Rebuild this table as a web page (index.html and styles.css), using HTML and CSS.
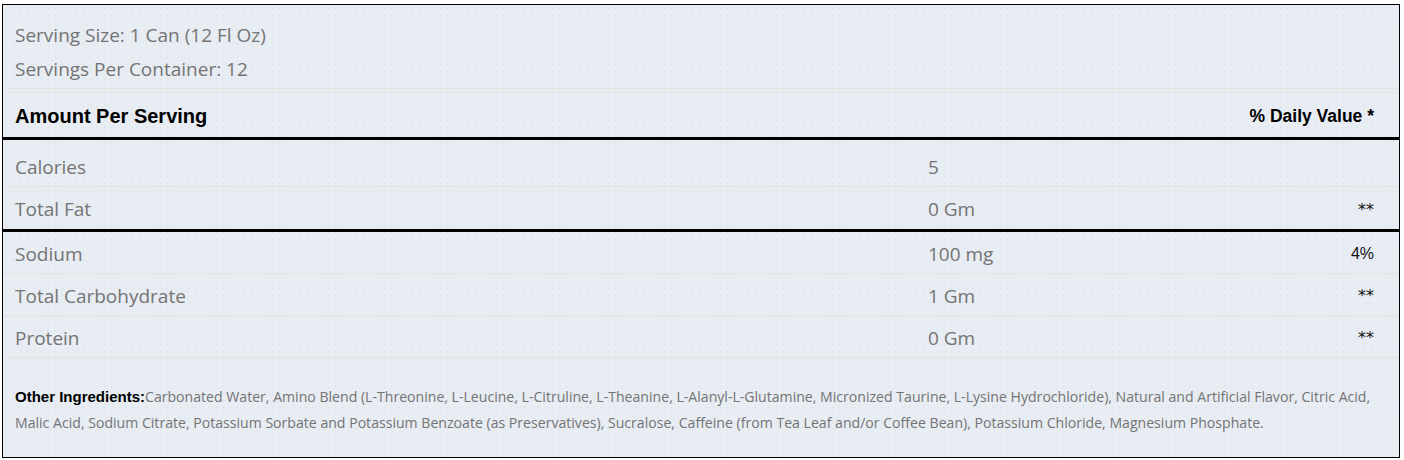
FILE: index.html
```html
<!DOCTYPE html>
<html>
<head>
<meta charset="utf-8">
<link rel="stylesheet" href="styles.css">
</head>
<body>
<div class="panel">
  <div class="serving">
    <div>Serving Size: 1 Can (12 Fl Oz)</div>
    <div>Servings Per Container: 12</div>
  </div>
  <div class="head">
    <span>Amount Per Serving</span>
    <span class="head-dv">% Daily Value *</span>
  </div>
  <div class="group group-thick">
    <div class="row first"><span class="name">Calories</span><span class="amt">5</span><span class="dv"></span></div>
    <div class="row last"><span class="name">Total Fat</span><span class="amt">0 Gm</span><span class="dv stars">**</span></div>
  </div>
  <div class="group">
    <div class="row"><span class="name">Sodium</span><span class="amt">100 mg</span><span class="dv">4%</span></div>
    <div class="row"><span class="name">Total Carbohydrate</span><span class="amt">1 Gm</span><span class="dv stars">**</span></div>
    <div class="row"><span class="name">Protein</span><span class="amt">0 Gm</span><span class="dv stars">**</span></div>
  </div>
  <div class="ingredients">
    <p><b>Other Ingredients:</b>Carbonated Water, Amino Blend (L-Threonine, L-Leucine, L-Citruline, L-Theanine, L-Alanyl-L-Glutamine, Micronized Taurine, L-Lysine Hydrochloride), Natural and Artificial Flavor, Citric Acid,<br>Malic Acid, Sodium Citrate, Potassium Sorbate and Potassium Benzoate (as Preservatives), Sucralose, Caffeine (from Tea Leaf and/or Coffee Bean), Potassium Chloride, Magnesium Phosphate.</p>
  </div>
</div>
</body>
</html>
```
FILE: styles.css
```css
* { box-sizing: border-box; }
html, body { margin: 0; padding: 0; background: #ffffff; }
body {
  padding: 4px 4px 2px 2px;
  font-family: "Open Sans", "Noto Sans", sans-serif;
  color: #747474;
}
.panel {
  border: 1px solid #000;
  background-color: #e8ecf3;
  background-image: radial-gradient(circle, #dfe3ec 0.8px, transparent 1.2px);
  background-size: 7px 7px;
  height: 454px;
}
.serving {
  padding: 13px 12px 2px;
  font-size: 19px;
  line-height: 34px;
  border-bottom: 1px solid #e6e4de;
}
.head {
  display: flex;
  justify-content: space-between;
  align-items: center;
  height: 51px;
  padding: 6px 25px 0 12px;
  font-family: "Liberation Sans", Arial, sans-serif;
  font-weight: bold;
  font-size: 20px;
  color: #000;
  border-bottom: 3px solid #000;
}
.head .head-dv { font-size: 17.5px; }
.group-thick { border-bottom: 3px solid #000; }
.row {
  display: grid;
  grid-template-columns: 913px 1fr auto;
  align-items: center;
  height: 42px;
  padding: 2px 25px 0 12px;
  font-size: 19px;
  border-bottom: 1px solid #e6e4de;
}
.row.first { height: 47px; padding-top: 8px; }
.row.last { border-bottom: none; height: 42px; }
.dv {
  font-family: "Liberation Sans", Arial, sans-serif;
  font-size: 16px;
  color: #111;
}
.dv.stars {
  font-family: "DejaVu Sans", sans-serif;
  font-size: 16px;
}
.ingredients {
  padding: 26px 25px 0 12px;
}
.ingredients p {
  margin: 0;
  font-size: 14.1px;
  line-height: 26px;
  white-space: nowrap;
}
.ingredients b {
  font-family: "Liberation Sans", Arial, sans-serif;
  font-size: 15px;
  color: #000;
}
```
